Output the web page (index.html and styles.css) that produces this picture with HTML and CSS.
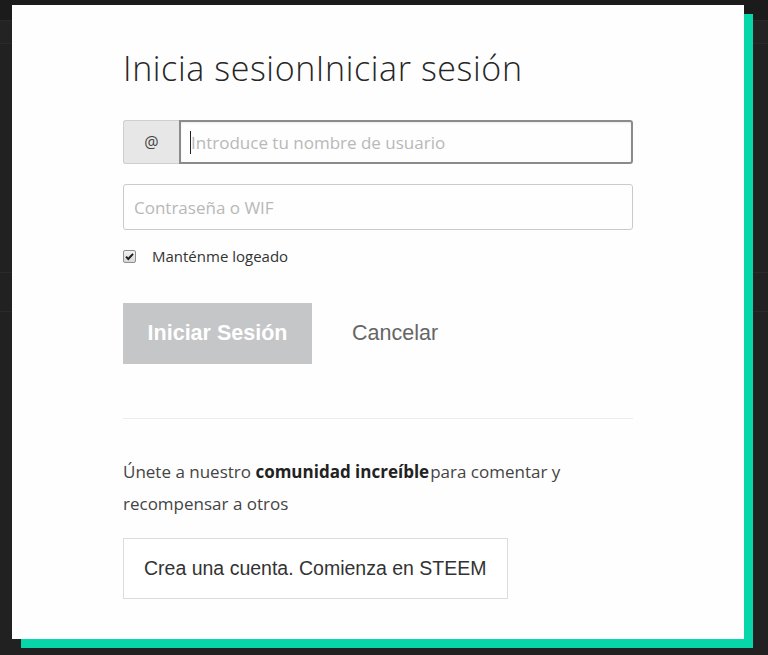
FILE: index.html
```html
<!DOCTYPE html>
<html lang="es">
<head>
<meta charset="utf-8">
<title>Iniciar sesión</title>
<link rel="stylesheet" href="styles.css">
</head>
<body>
<div class="backdrop">
  <div class="modal">
    <h1 class="title">Inicia sesionIniciar sesión</h1>
    <form class="login">
      <div class="input-group">
        <span class="addon">@</span>
        <div class="field focused">
          <input class="text-input" type="text" placeholder="Introduce tu nombre de usuario">
          <span class="caret"></span>
        </div>
      </div>
      <input class="text-input password" type="password" placeholder="Contraseña o WIF">
      <label class="remember">
        <span class="checkbox">
          <svg viewBox="0 0 13 13" width="13" height="13"><path d="M3 6.6 L5.3 9 L10 3.8" fill="none" stroke="#222" stroke-width="2"/></svg>
        </span>
        <span>Manténme logeado</span>
      </label>
      <div class="actions">
        <button type="button" class="btn-primary">Iniciar Sesión</button>
        <button type="button" class="btn-link">Cancelar</button>
      </div>
    </form>
    <hr class="divider">
    <p class="signup-text">Únete a nuestro <strong>comunidad increíble</strong>para comentar y recompensar a otros</p>
    <button type="button" class="btn-hollow">Crea una cuenta. Comienza en STEEM</button>
  </div>
</div>
</body>
</html>
```

FILE: styles.css
```css
* { box-sizing: border-box; }
html, body { margin: 0; padding: 0; }
body {
  width: 768px;
  height: 655px;
  overflow: hidden;
  background:
    linear-gradient(#1b1b1b 0 20px, #2a2a2a 20px 21px, #232323 21px 43px, #2a2a2a 43px 44px, #212121 44px 272px, #2a2a2a 272px 273px, #212121 273px 311px, #2a2a2a 311px 312px, #212121 312px);
  font-family: "Open Sans", "Noto Sans", sans-serif;
  color: #333;
}
.backdrop {
  padding: 5px 0 0 12px;
}
.modal {
  width: 732px;
  height: 634px;
  background: #fefefe;
  box-shadow: 9px 9px 0 #06d6a9;
  padding: 0 111px;
  display: flex;
  flex-direction: column;
}
.title {
  margin: 41px 0 0;
  font-weight: 300;
  font-size: 34px;
  letter-spacing: 0.6px;
  line-height: 44px;
  color: #262626;
}
.login {
  margin-top: 30px;
  display: flex;
  flex-direction: column;
}
.input-group {
  display: flex;
  height: 44px;
}
.addon {
  width: 56px;
  flex: none;
  display: flex;
  align-items: center;
  justify-content: center;
  background: #e7e7e7;
  border: 1px solid #cfcfcf;
  border-right: none;
  border-radius: 3px 0 0 3px;
  font-size: 16px;
  color: #444;
}
.field {
  flex: 1;
  position: relative;
  display: flex;
}
.text-input {
  width: 100%;
  height: 46px;
  border: 1px solid #cacaca;
  border-radius: 3px;
  padding: 0 10px;
  font-family: "Open Sans", "Noto Sans", sans-serif;
  font-size: 17px;
  color: #333;
  background: #fefefe;
  outline: none;
}
.text-input::placeholder { color: #b8b8b8; }
.field .text-input {
  height: 44px;
  border: 2px solid #8b8b8b;
  border-radius: 0 3px 3px 0;
  box-shadow: inset 0 1px 2px rgba(0,0,0,0.08);
  padding-left: 10px;
}
.caret {
  position: absolute;
  left: 11px;
  top: 11px;
  width: 1px;
  height: 23px;
  background: #222;
}
.password {
  margin-top: 20px;
}
.remember {
  display: flex;
  align-items: center;
  gap: 16px;
  margin-top: 16px;
  font-size: 15px;
  color: #333;
}
.checkbox {
  width: 13px;
  height: 13px;
  border: 1px solid #8f8f8f;
  border-radius: 2px;
  background: linear-gradient(#f2f2f2, #d8d8d8);
  display: flex;
}
.checkbox svg { display: block; margin: -1px; }
.actions {
  display: flex;
  align-items: center;
  gap: 40px;
  margin-top: 37px;
}
.btn-primary {
  width: 189px;
  height: 61px;
  border: none;
  background: #c5c6c8;
  color: #fff;
  font-family: "Liberation Sans", Arial, sans-serif;
  font-weight: bold;
  font-size: 21.5px;
  padding: 0;
}
.btn-link {
  border: none;
  background: none;
  padding: 0;
  color: #666;
  font-family: "Liberation Sans", Arial, sans-serif;
  font-size: 21.5px;
}
.divider {
  margin: 54px 0 0;
  border: none;
  border-top: 1px solid #ececec;
  width: 510px;
}
.signup-text {
  margin: 37px 0 0;
  font-size: 17px;
  line-height: 32px;
  color: #444;
  width: 480px;
}
.signup-text strong { color: #222; margin-right: 1px; }
.btn-hollow {
  align-self: flex-start;
  margin-top: 18px;
  width: 385px;
  height: 61px;
  background: #fff;
  border: 1px solid #dcdcdc;
  color: #333;
  font-family: "Liberation Sans", Arial, sans-serif;
  font-size: 19.5px;
  padding: 0 0 0 20px;
  text-align: left;
}
```
